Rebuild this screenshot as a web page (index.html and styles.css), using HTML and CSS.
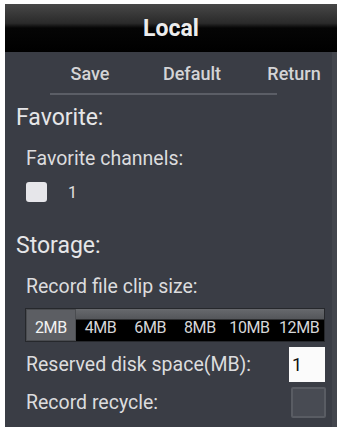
FILE: index.html
```html
<!DOCTYPE html>
<html>
<head>
<meta charset="utf-8">
<link rel="stylesheet" href="styles.css">
</head>
<body>
<div class="panel">
  <div class="header">Local</div>
  <div class="toolbar">
    <span class="tb-item">Save</span>
    <span class="tb-item">Default</span>
    <span class="tb-item">Return</span>
  </div>
  <div class="indicator"></div>
  <div class="content">
    <div class="section-title first">Favorite:</div>
    <div class="field-label">Favorite channels:</div>
    <div class="check-row">
      <span class="check-white"></span>
      <span class="check-text">1</span>
    </div>
    <div class="section-title storage">Storage:</div>
    <div class="field-label">Record file clip size:</div>
    <div class="seg-bar">
      <span class="seg selected">2MB</span>
      <span class="seg">4MB</span>
      <span class="seg">6MB</span>
      <span class="seg">8MB</span>
      <span class="seg">10MB</span>
      <span class="seg">12MB</span>
    </div>
    <div class="row reserved">
      <span class="row-label">Reserved disk space(MB):</span>
      <span class="input-box">1</span>
    </div>
    <div class="row recycle">
      <span class="row-label">Record recycle:</span>
      <span class="check-dark"></span>
    </div>
  </div>
</div>
</body>
</html>
```
FILE: styles.css
```css
html, body {
  margin: 0;
  padding: 0;
  background: #ffffff;
}
body {
  font-family: Roboto, "Liberation Sans", sans-serif;
}
.panel {
  margin: 4px 0 0 5px;
  width: 332px;
  height: 423px;
  background: #3a3d45;
  overflow: hidden;
  box-shadow: inset -5px 0 0 #43464d;
}
.header {
  height: 48px;
  line-height: 50px;
  text-align: center;
  font-size: 23px;
  font-weight: 700;
  color: #ececec;
  background: linear-gradient(#474747 0%, #2a2a2a 40%, #050505 50%, #000 100%);
}
.toolbar {
  height: 41px;
  display: grid;
  grid-template-columns: 102px 102px 102px;
  padding-left: 34px;
  align-items: center;
}
.tb-item {
  text-align: center;
  font-size: 18px;
  font-weight: 500;
  color: #d4d4d6;
  padding-top: 2px;
}
.indicator {
  height: 2px;
  width: 227px;
  margin-left: 45px;
  background: #5b5e66;
}
.content {
  padding: 0 11px 0 11px;
}
.section-title {
  font-size: 23px;
  line-height: 28px;
  color: #e6e6e8;
}
.section-title.first {
  margin-top: 9px;
}
.section-title.storage {
  margin-top: 30px;
}
.field-label {
  margin-top: 15px;
  margin-left: 10px;
  font-size: 19.5px;
  line-height: 24px;
  color: #dcdcde;
}
.check-row {
  margin-top: 11px;
  margin-left: 10px;
  height: 20px;
  display: flex;
  align-items: center;
}
.check-white {
  width: 21px;
  height: 20px;
  border-radius: 3px;
  background: #e6e6ea;
}
.check-text {
  margin-left: 21px;
  font-size: 16px;
  color: #e0e0e0;
}
.seg-bar {
  margin-top: 9px;
  margin-left: 9px;
  width: 300px;
  height: 34px;
  box-sizing: border-box;
  display: flex;
  border: 1px solid #26282c;
  background: linear-gradient(#67696d 0%, #55575b 30%, #000 36%, #000 100%);
}
.seg {
  flex: 1;
  display: flex;
  align-items: center;
  justify-content: center;
  padding-top: 4px;
  font-size: 16px;
  color: #d6d6d8;
  letter-spacing: -0.4px;
}
.seg.selected {
  background: #5c5e63;
  color: #f2f2f2;
  box-shadow: inset 0 0 0 1px #4a4c50;
}
.row {
  display: flex;
  align-items: center;
  justify-content: space-between;
  margin-left: 10px;
}
.row.reserved {
  margin-top: 5px;
  height: 35px;
}
.row.recycle {
  margin-top: 5px;
  height: 31px;
}
.row-label {
  font-size: 19.5px;
  line-height: 24px;
  color: #dcdcde;
}
.input-box {
  width: 36px;
  height: 35px;
  box-sizing: border-box;
  margin-right: 1px;
  background: #fbfbfb;
  color: #111;
  font-size: 18px;
  line-height: 35px;
  padding-left: 3px;
}
.check-dark {
  width: 35px;
  height: 31px;
  box-sizing: border-box;
  border: 2px solid #595c63;
  border-radius: 2px;
  background: #484b53;
}
```
